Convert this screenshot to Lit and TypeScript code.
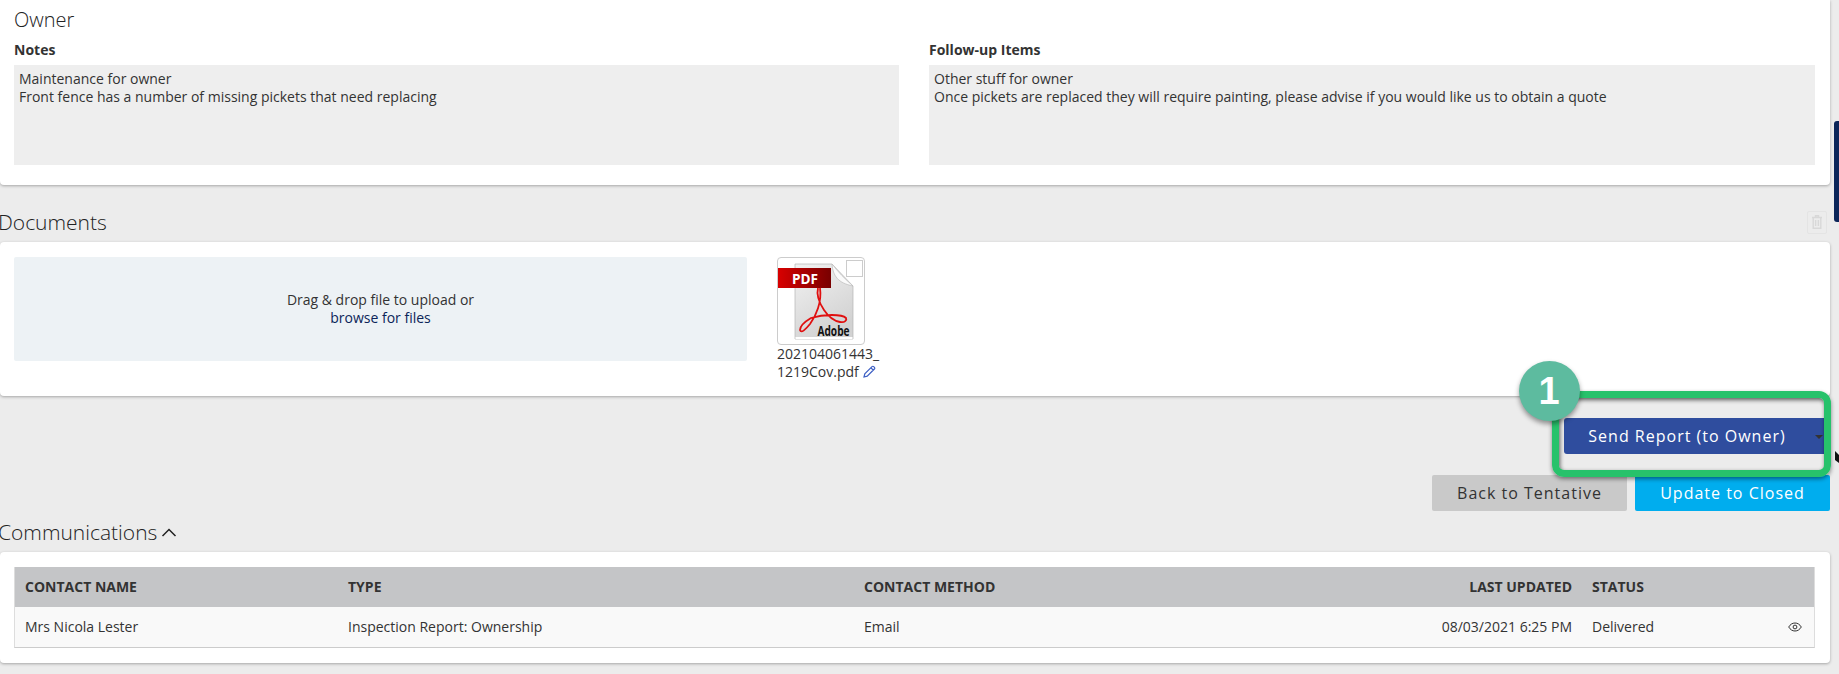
import { LitElement, html, css } from "lit";
import { customElement } from "lit/decorators.js";

@customElement("app-root")
export class AppRoot extends LitElement {
  static styles = css`
    :host { display: block; width: 1839px; height: 674px; overflow: hidden; position: relative; background: #ececec;
      font-family: "Open Sans", sans-serif; font-size: 14px; color: #333; line-height: 18px; }
    * { box-sizing: border-box; }
    .page { width: 1830px; display: flex; flex-direction: column; }
    .card { background: #fff; border-radius: 0 0 4px 4px; box-shadow: 0 1px 3px rgba(0,0,0,.3); }
    .owner { height: 185px; padding: 8px 14px 0; display: flex; flex-direction: column; }
    .owner h2 { margin: 0; font-size: 20px; line-height: 24px; font-weight: 300; color: #222; }
    .cols { display: grid; grid-template-columns: 885px 886px; column-gap: 30px; margin-top: 9px; }
    .cols label { display: block; font-weight: 700; font-size: 14px; line-height: 18px; margin-bottom: 6px; }
    .note { height: 100px; background: #eee; padding: 5px; }
    .head { display: flex; align-items: center; justify-content: space-between; height: 24px; font-size: 21px; font-weight: 300; line-height: 24px; color: #222; margin-left: -2px; }
    .docs-head { margin-top: 25px; margin-bottom: 8px; padding-right: 3px; }
    .trash { width: 20px; height: 23px; border: 1px solid #e4e4e4; border-radius: 2px; display: flex; align-items: center; justify-content: center; }
    .docs { height: 154px; padding: 15px 14px 0; display: flex; border-radius: 4px; }
    .drop { width: 733px; height: 104px; background: #edf2f5; border-radius: 2px; display: flex; flex-direction: column; justify-content: center; text-align: center; padding-bottom: 1px; }
    .drop a { color: #0b2559; }
    .file { margin-left: 30px; width: 90px; font-size: 14px; line-height: 18px; }
    .thumb { width: 88px; height: 88px; border: 1px solid #ccc; border-radius: 4px; position: relative; overflow: hidden; background: #fff; }
    .thumb svg { display: block; }
    .check { position: absolute; top: 2px; right: 1px; width: 17px; height: 17px; border: 1px solid #ccc; background: #fff; }
    .fname { white-space: nowrap; }
    .pencil { vertical-align: -1px; margin-left: 1px; }
    .send-row { display: flex; justify-content: flex-end; margin-top: 22px; padding-right: 6px; }
    .btn { height: 36px; border-radius: 2px; font-size: 16px; letter-spacing: 1px; display: flex; align-items: center; justify-content: center; border: none; font-family: inherit; }
    .send { width: 260px; background: #2f4d9e; color: #fff; position: relative; border-radius: 3px 0 0 3px; padding-right: 20px; }
    .caret { position: absolute; right: 1px; top: 17px; width: 0; height: 0; border-left: 4px solid transparent; border-right: 4px solid transparent; border-top: 4px solid #333; }
    .actions { display: flex; justify-content: flex-end; gap: 8px; margin-top: 21px; }
    .actions .btn { width: 195px; }
    .back { background: #c9c9c9; color: #333; }
    .update { background: #00adee; color: #fff; }
    .comm-head { margin-top: 9px; justify-content: flex-start; gap: 4px; margin-bottom: 8px; }
    .comm { height: 111px; padding: 15px 14px 0; border-radius: 4px; }
    .tbl { width: 1801px; border-bottom: 1px solid #ccc; border-left: 1px solid #ddd; border-right: 1px solid #ddd; }
    .row { display: grid; grid-template-columns: 323px 516px 499px 209px 1fr 26px; height: 40px; align-items: center; padding-left: 10px; }
    .row.h { background: #c4c5c7; font-weight: 700; font-size: 14px; }
    .row.b { background: #f9f9f9; }
    .r { text-align: right; }
    .st { padding-left: 20px; }
    .eye { display: flex; align-items: center; margin-top: -1px; }
    .bar { position: absolute; right: 0; top: 121px; width: 5px; height: 101px; background: #0b2559; border-radius: 3px 0 0 3px; }
    .hl { position: absolute; left: 1552px; top: 391px; width: 279px; height: 86px; border: 7px solid #27c26b; border-radius: 12px;
      box-shadow: 0 2px 4px rgba(0,0,0,.45), inset 1px 2px 4px rgba(0,0,0,.6); }
    .num { position: absolute; left: 1519px; top: 361px; width: 61px; height: 60px; border-radius: 50%; background: #5dbb9f; color: #fff; padding-right: 1px;
      font-family: "Liberation Sans", sans-serif; font-size: 38px; font-weight: 700; line-height: 60px; text-align: center; box-shadow: 0 3px 5px rgba(0,0,0,.4); }
    .cursor { position: absolute; left: 1835px; top: 451px; }
  `;

  render() {
    return html`
      <div class="page">
        <section class="card owner">
          <h2>Owner</h2>
          <div class="cols">
            <div><label>Notes</label><div class="note">Maintenance for owner<br />Front fence has a number of missing pickets that need replacing</div></div>
            <div><label>Follow-up Items</label><div class="note">Other stuff for owner<br />Once pickets are replaced they will require painting, please advise if you would like us to obtain a quote</div></div>
          </div>
        </section>
        <div class="head docs-head">
          <span>Documents</span>
          <span class="trash">
            <svg width="10" height="14" viewBox="0 0 10 14" fill="none" stroke="#d8d8d8" stroke-width="1.4"><path d="M0 2.500h10M3.500 2.500V.8h3v1.700M1.200 2.500h7.600V13.300H1.200zM3.600 5v6M6.400 5v6"/></svg>
          </span>
        </div>
        <section class="card docs">
          <div class="drop"><div>Drag &amp; drop file to upload or</div><div><a>browse for files</a></div></div>
          <div class="file">
            <div class="thumb">
              <svg width="86" height="86" viewBox="0 0 86 86">
                <defs>
                  <linearGradient id="pg" x1="0" y1="0" x2="0.5" y2="1"><stop offset="0" stop-color="#f2f2f2"/><stop offset="1" stop-color="#d2d2d2"/></linearGradient>
                  <linearGradient id="rg" x1="0" y1="0" x2="1" y2="0"><stop offset="0" stop-color="#d80000"/><stop offset="1" stop-color="#780000"/></linearGradient>
                </defs>
                <path d="M17 6H54L75 28V81H17Z" fill="url(#pg)" stroke="#b5b5b5" stroke-width=".7"/>
                <rect x="17.500" y="79" width="57" height="2" fill="#fff"/>
                <path d="M54 6C55 18 60 25 75 28C67 21 60 14 54 6Z" fill="#fafafa" stroke="#bbb" stroke-width=".7"/>
                <rect x="0" y="10" width="53" height="20" fill="url(#rg)"/>
                <text x="14" y="25.500" font-family="Open Sans, sans-serif" font-weight="700" font-size="15" fill="#fff" textLength="26" lengthAdjust="spacingAndGlyphs">PDF</text>
                <path d="M40 30C38 38 42 46 46 52C50 58 56 63 62 64C67 65 69 62 68 60C64 56 46 56 33 60C28 63 22 68 22 72C23 76 28 71 32 66C38 58 44 44 42 30" fill="none" stroke="#e01010" stroke-width="1.800"/>
                <text x="39.500" y="77.500" font-family="Open Sans, sans-serif" font-weight="700" font-size="14" fill="#111" textLength="32" lengthAdjust="spacingAndGlyphs">Adobe</text>
              </svg>
              <span class="check"></span>
            </div>
            <div class="fname">202104061443_</div>
            <div class="fname">1219Cov.pdf
              <svg class="pencil" width="13" height="13" viewBox="0 0 13 13" fill="none" stroke="#3d5fc4" stroke-width="1.2"><path d="M1 12l.8-3.200L9 1.600a1.200 1.200 0 0 1 1.700 0l.7.7a1.200 1.200 0 0 1 0 1.700L4.200 11.200zM8 2.800l2.200 2.200"/></svg>
            </div>
          </div>
        </section>
        <div class="send-row"><button class="btn send">Send Report (to Owner)<span class="caret"></span></button></div>
        <div class="actions"><button class="btn back">Back to Tentative</button><button class="btn update">Update to Closed</button></div>
        <div class="head comm-head">
          <span>Communications</span>
          <svg width="16" height="9" viewBox="0 0 16 9" fill="none" stroke="#222" stroke-width="1.500"><path d="M1.500 8L8 1.500 14.500 8"/></svg>
        </div>
        <section class="card comm">
          <div class="tbl">
            <div class="row h"><div>CONTACT NAME</div><div>TYPE</div><div>CONTACT METHOD</div><div class="r">LAST UPDATED</div><div class="st">STATUS</div><div></div></div>
            <div class="row b"><div>Mrs Nicola Lester</div><div>Inspection Report: Ownership</div><div>Email</div><div class="r">08/03/2021 6:25 PM</div><div class="st">Delivered</div>
              <div class="eye"><svg width="14" height="10" viewBox="0 0 14 10" fill="none" stroke="#333" stroke-width="1"><path d="M.7 5C2.300 2.300 4.500 1 7 1s4.700 1.300 6.300 4C11.700 7.700 9.500 9 7 9S2.300 7.700 .7 5Z"/><circle cx="7" cy="5" r="1.900"/></svg></div>
            </div>
          </div>
        </section>
      </div>
      <div class="bar"></div>
      <div class="hl"></div>
      <div class="num">1</div>
      <svg class="cursor" width="4" height="12" viewBox="0 0 4 12"><path d="M0 0L4 4 4 12 0 9Z" fill="#111"/></svg>
    `;
  }
}
